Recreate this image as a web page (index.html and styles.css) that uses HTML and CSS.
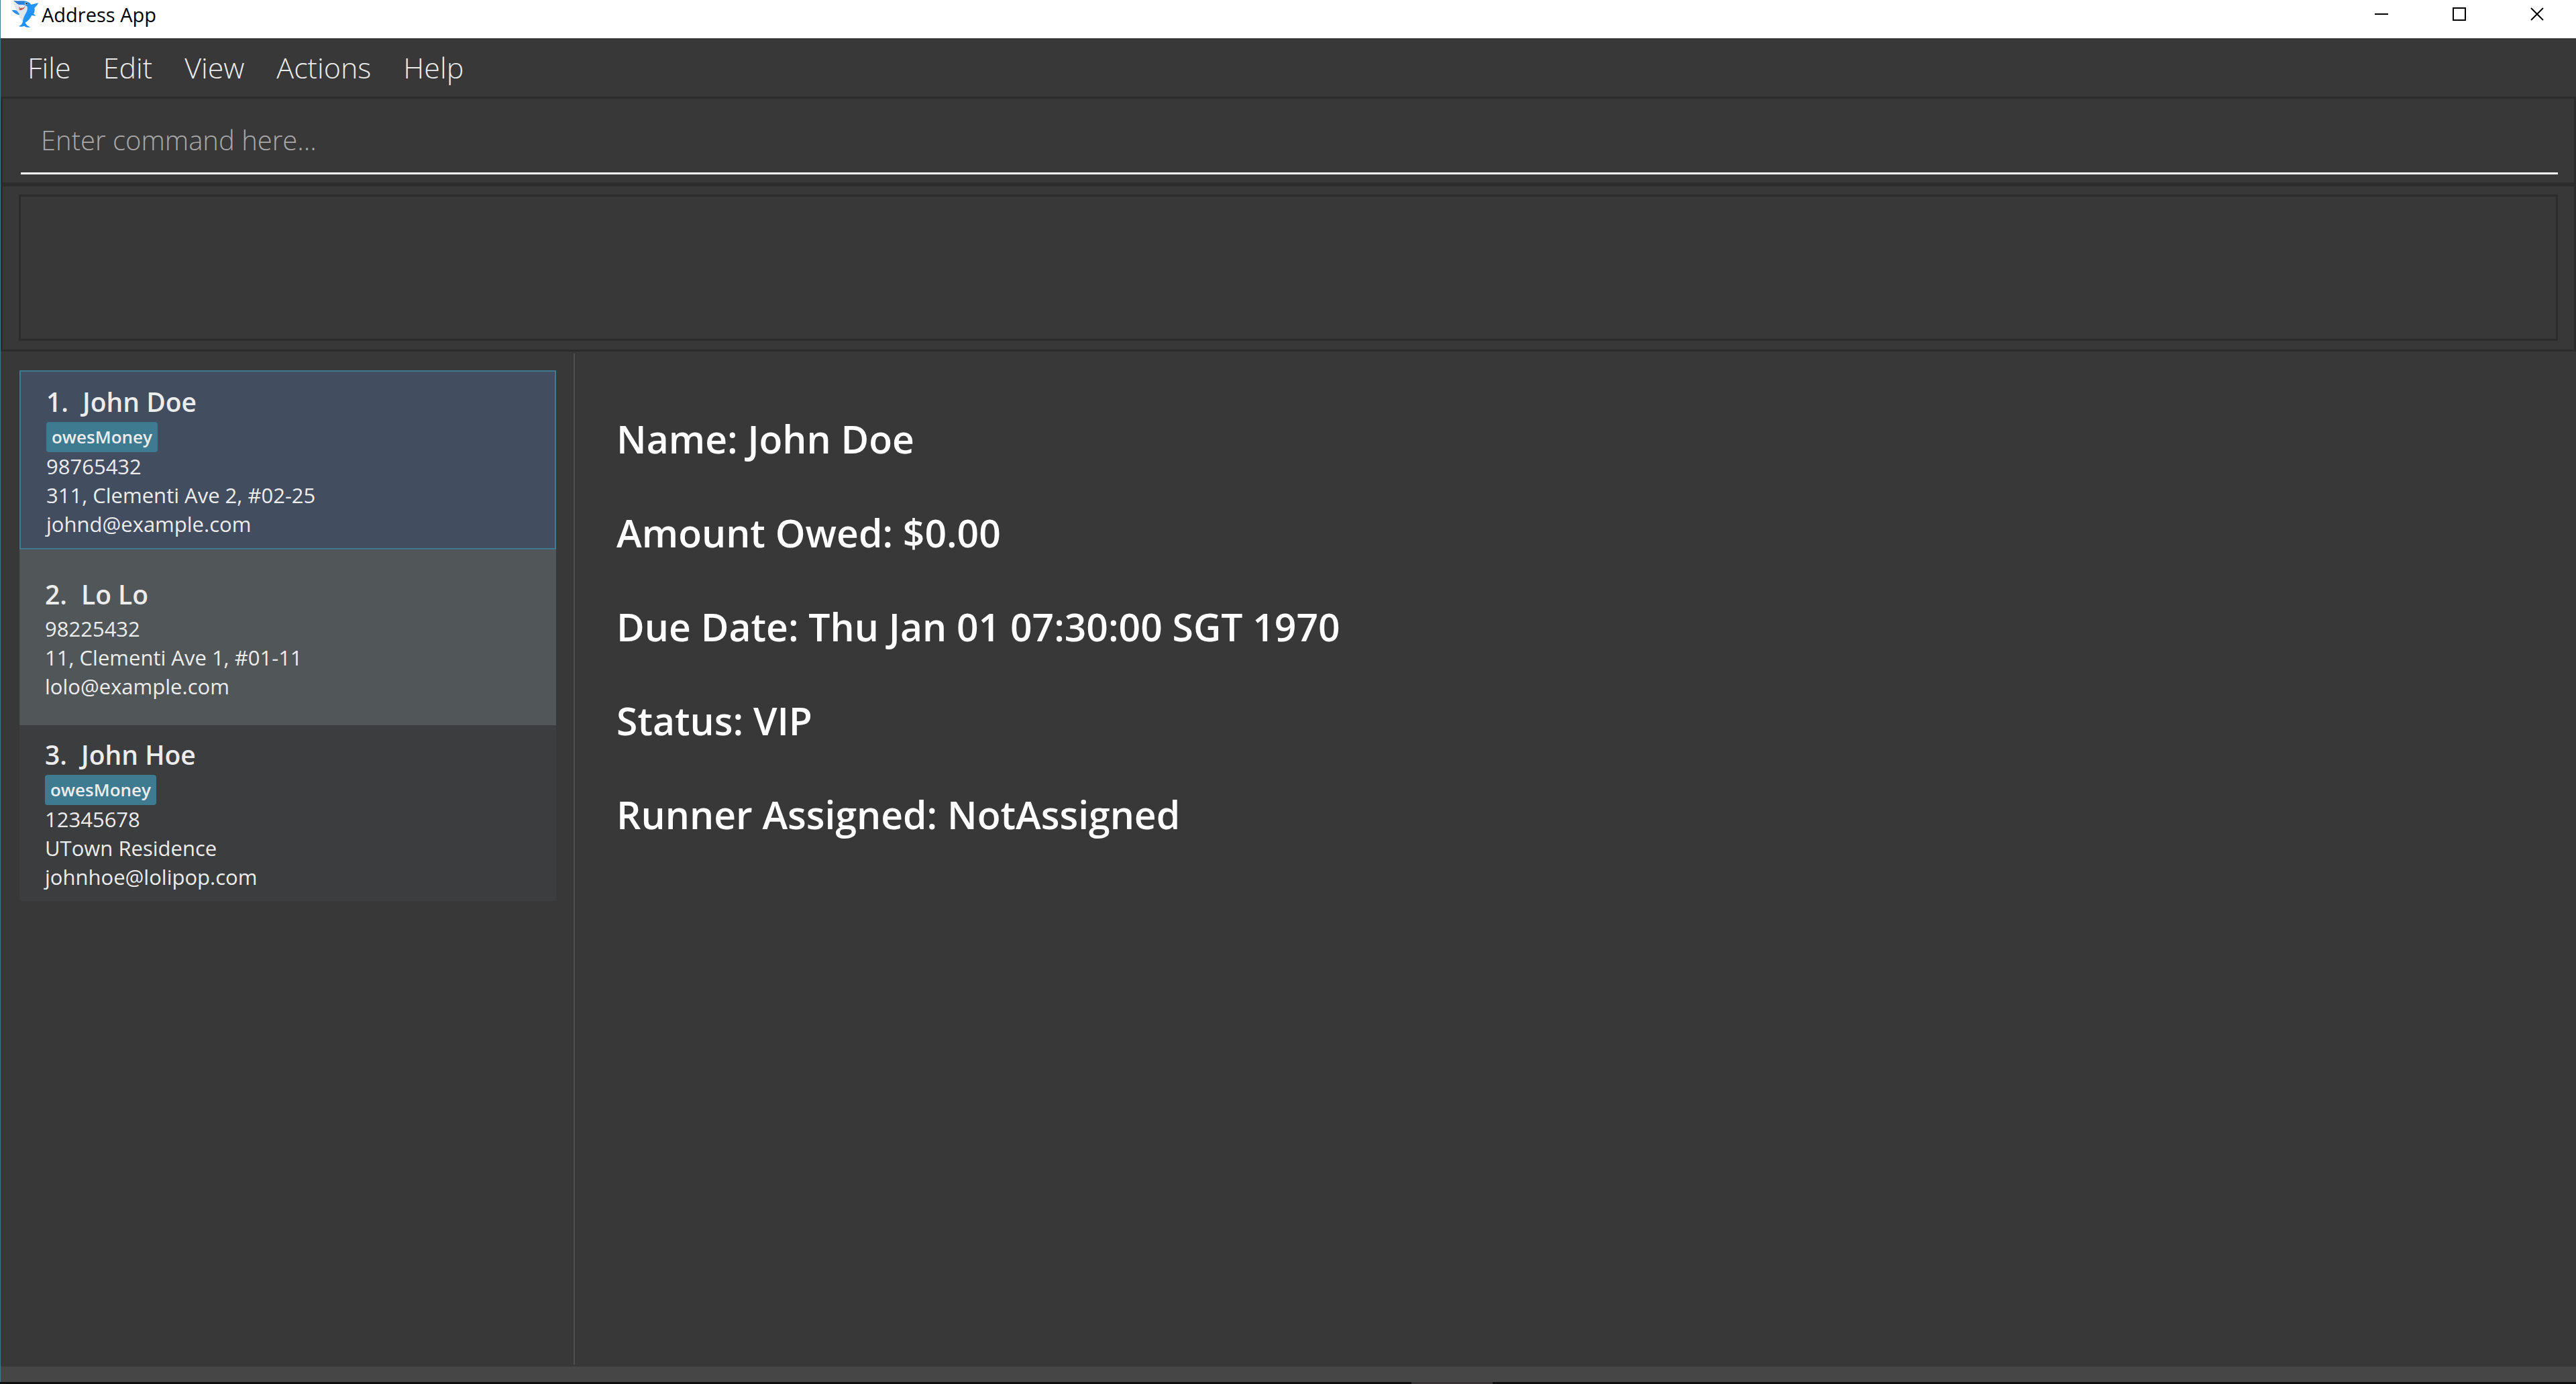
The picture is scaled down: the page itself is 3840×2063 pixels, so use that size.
FILE: index.html
```html
<!DOCTYPE html>
<html lang="en">
<head>
<meta charset="utf-8">
<title>Address App</title>
<link rel="stylesheet" href="styles.css">
</head>
<body>
<div class="window">
  <header class="titlebar">
    <svg class="app-icon" viewBox="0 0 120 123" aria-hidden="true">
      <defs>
        <linearGradient id="skin" x1="0" y1="0" x2="1" y2="1">
          <stop offset="0" stop-color="#2f74c4"/>
          <stop offset="0.5" stop-color="#2196f8"/>
          <stop offset="1" stop-color="#1b83ea"/>
        </linearGradient>
      </defs>
      <path fill="#2b8fee" d="M2 46 C14 44 28 46 38 54 L40 68 C24 66 10 58 2 46Z"/>
      <path fill="url(#skin)" d="M9 3 C28 6 48 2 68 6 C78 9 84 15 88 20 C98 20 108 16 120 13 C118 22 108 30 103 36 C106 46 103 56 99 62 C106 66 108 69 107 72 C100 70 94 69 90 69 C84 84 74 94 62 101 C66 112 76 118 86 122 C74 123 64 122 57 116 C50 120 42 121 33 117 C42 114 48 108 50 100 C52 88 54 76 52 62 L30 20Z"/>
      <path fill="#dfe7ee" d="M9 3 C14 14 28 22 42 21 C54 20 66 22 71 30 C74 42 68 54 62 64 C56 76 51 86 49 98 C45 94 43 90 44 84 C34 80 32 72 36 62 C24 50 10 28 9 3Z"/>
      <path fill="#c4564f" d="M34 30 C42 34 54 33 62 28 C58 40 48 46 36 46Z"/>
      <path fill="#fff" d="M36 31l4 7 4-6 4 6 4-7 3 5 4-7z"/>
      <circle cx="66" cy="16" r="6" fill="#fff"/>
      <circle cx="67" cy="16" r="4" fill="#123"/>
    </svg>
    <h1 class="app-title">Address App</h1>
    <div class="window-buttons">
      <button class="window-button" aria-label="Minimize"><svg viewBox="0 0 20 20"><path d="M0 10H20"/></svg></button>
      <button class="window-button" aria-label="Maximize"><svg viewBox="0 0 20 20"><path d="M1 1H19V19H1Z"/></svg></button>
      <button class="window-button" aria-label="Close"><svg viewBox="0 0 20 20"><path d="M1 1L19 19M19 1L1 19"/></svg></button>
    </div>
  </header>

  <nav class="menubar">
    <button class="menu">File</button>
    <button class="menu">Edit</button>
    <button class="menu">View</button>
    <button class="menu">Actions</button>
    <button class="menu">Help</button>
  </nav>

  <section class="command-pane">
    <input class="command-input" type="text" aria-label="Command" placeholder="Enter command here...">
  </section>

  <section class="result-pane">
    <textarea class="result-display" aria-label="Result" readonly></textarea>
  </section>

  <main class="split">
    <aside class="list-pane">
      <ul class="person-list">
        <li class="card selected">
          <h2 class="person"><span>1.</span><span>John Doe</span></h2>
          <span class="tag">owesMoney</span>
          <p class="field">98765432</p>
          <p class="field">311, Clementi Ave 2, #02-25</p>
          <p class="field">johnd@example.com</p>
        </li>
        <li class="card even">
          <h2 class="person"><span>2.</span><span>Lo Lo</span></h2>
          <p class="field">98225432</p>
          <p class="field">11, Clementi Ave 1, #01-11</p>
          <p class="field">lolo@example.com</p>
        </li>
        <li class="card">
          <h2 class="person"><span>3.</span><span>John Hoe</span></h2>
          <span class="tag">owesMoney</span>
          <p class="field">12345678</p>
          <p class="field">UTown Residence</p>
          <p class="field">johnhoe@lolipop.com</p>
        </li>
      </ul>
    </aside>
    <section class="details">
      <p class="detail">Name: John Doe</p>
      <p class="detail">Amount Owed: $0.00</p>
      <p class="detail">Due Date: Thu Jan 01 07:30:00 SGT 1970</p>
      <p class="detail">Status: VIP</p>
      <p class="detail">Runner Assigned: NotAssigned</p>
    </section>
  </main>

  <footer class="statusbar"></footer>
</div>
<div class="taskbar-edge"><span class="taskbar-item"></span></div>
</body>
</html>
```
FILE: styles.css
```css
* {
  box-sizing: border-box;
}

body {
  margin: 0;
  height: 100vh;
  display: flex;
  flex-direction: column;
  background: #383838;
  color: #ececec;
  font-family: "Open Sans", "Noto Sans", sans-serif;
}

h1, h2, p, ul {
  margin: 0;
  padding: 0;
}

button {
  border: 0;
  background: none;
  color: inherit;
  font: inherit;
}

.window {
  flex: 1;
  display: flex;
  flex-direction: column;
  border-left: 1px solid #3e7b91;
}

.titlebar {
  height: 57px;
  padding-left: 16px;
  display: flex;
  align-items: flex-start;
  background: #fff;
  color: #000;
}

.app-icon {
  width: 40px;
  height: 41px;
}

.app-title {
  flex: 1;
  padding-left: 5px;
  font-size: 29px;
  font-weight: 400;
  line-height: 44px;
}

.window-buttons {
  display: flex;
}

.window-button {
  width: 116px;
  height: 42px;
  padding: 0;
  display: flex;
  align-items: center;
  justify-content: center;
}

.window-button svg {
  width: 20px;
  height: 20px;
  fill: none;
  stroke: #000;
  stroke-width: 2;
}

.menubar {
  height: 87px;
  padding-left: 16px;
  display: flex;
  align-items: center;
}

.menu {
  padding: 0 24px;
  font-size: 43px;
  font-weight: 300;
  line-height: 60px;
}

.command-pane {
  height: 131px;
  padding: 12px 24px 0 27px;
  border: 3px solid #2c2c2c;
}

.command-input {
  display: block;
  width: 100%;
  height: 101px;
  padding: 0 30px;
  border: 0;
  border-bottom: 3px solid #fff;
  background: none;
  color: #fff;
  font: 300 40px/60px "Open Sans", "Noto Sans", sans-serif;
}

.command-input::placeholder {
  color: #a9a9a9;
  opacity: 1;
}

.result-pane {
  height: 249px;
  padding: 12px 24px 13px;
  border: 3px solid #2c2c2c;
}

.result-display {
  display: block;
  width: 100%;
  height: 100%;
  resize: none;
  border: 3px solid #2c2c2c;
  background: none;
  color: #fff;
}

.split {
  flex: 1;
  display: grid;
  grid-template-columns: 22.3% 1fr;
  padding: 3px 0;
}

.list-pane {
  padding: 25px 26px 0 28px;
  border-right: 2px solid #4f4f4f;
}

.person-list {
  list-style: none;
}

.card {
  min-height: 262px;
  padding: 0 38px;
  display: flex;
  flex-direction: column;
  justify-content: center;
  align-items: flex-start;
  background: #3c3d3f;
}

.card.even {
  background: #515658;
}

.card.selected {
  min-height: 267px;
  border: 2px solid #3e7b91;
  background: #424d5f;
}

.person {
  display: flex;
  gap: 21px;
  font-size: 39px;
  font-weight: 600;
  line-height: 60px;
}

.tag {
  padding: 0 8px;
  border-radius: 4px;
  background: #3e7b91;
  font-size: 26px;
  font-weight: 600;
  line-height: 45px;
}

.field {
  font-size: 31px;
  line-height: 43px;
}

.details {
  padding: 57px 62px;
}

.detail {
  color: #fff;
  font-size: 57px;
  font-weight: 600;
  line-height: 140px;
}

.statusbar {
  height: 23px;
  background: #464646;
}

.taskbar-edge {
  height: 3px;
  display: flex;
  background: #100f10;
}

.taskbar-item {
  width: 121px;
  margin-left: 2104px;
  background: #353334;
}
```
